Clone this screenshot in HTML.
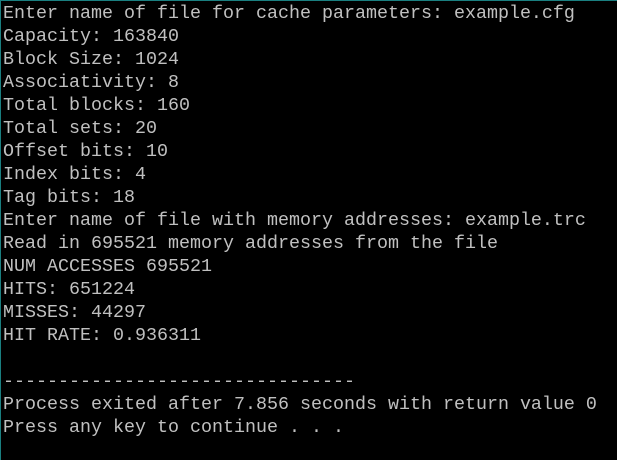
<!DOCTYPE html>
<html><head><style>
html,body{margin:0;padding:0;background:#000;}
body{width:617px;height:460px;overflow:hidden;position:relative;}
.b{position:absolute;left:0;top:0;width:617px;height:460px;box-sizing:border-box;border-left:1px solid #1a7f80;border-top:1px solid #1a7f80;}
pre{position:absolute;left:3px;top:2px;margin:0;font-family:"Liberation Mono",monospace;font-size:18.33px;line-height:23px;color:#c0c0c0;}
</style></head><body><div class="b"></div><pre>Enter name of file for cache parameters: example.cfg
Capacity: 163840
Block Size: 1024
Associativity: 8
Total blocks: 160
Total sets: 20
Offset bits: 10
Index bits: 4
Tag bits: 18
Enter name of file with memory addresses: example.trc
Read in 695521 memory addresses from the file
NUM ACCESSES 695521
HITS: 651224
MISSES: 44297
HIT RATE: 0.936311

--------------------------------
Process exited after 7.856 seconds with return value 0
Press any key to continue . . .</pre></body></html>
